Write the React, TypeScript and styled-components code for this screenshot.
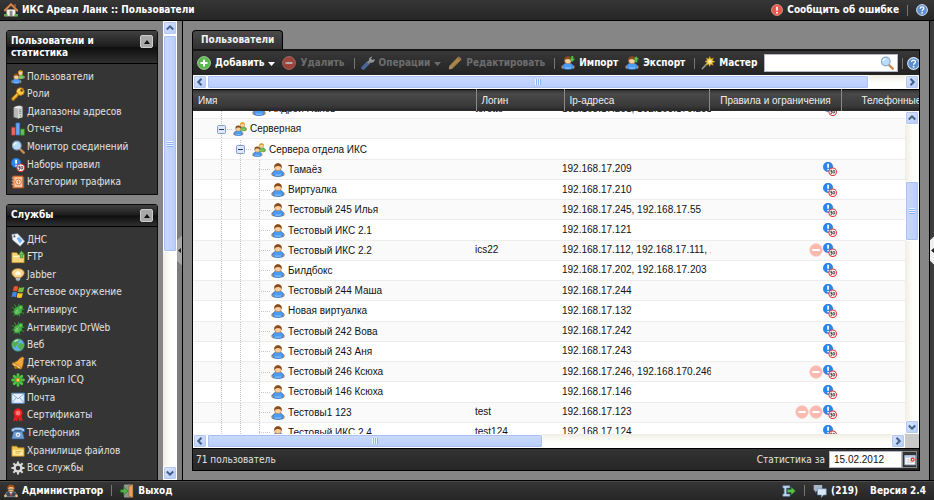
import React, { useLayoutEffect, useRef } from "react";
import styled, { createGlobalStyle, css } from "styled-components";

const ui = `"DejaVu Sans Condensed", "Noto Sans", sans-serif`;
const grid = `"Liberation Sans", "Noto Sans", sans-serif`;

const Global = createGlobalStyle`
  * { box-sizing: border-box; }
  html, body, #root { height: 100%; }
  body { margin: 0; overflow: hidden; background: #868686; font-family: ${ui}; font-size: 10px; line-height: 14px; color: #e2e2e2; }
  button, input { font: inherit; color: inherit; }
`;

/* ---------- icons ---------- */

const Svg = styled.svg<{ $size?: number; $dim?: boolean }>`
  display: block;
  flex: none;
  width: ${(p) => p.$size ?? 14}px;
  height: ${(p) => p.$size ?? 14}px;
  opacity: ${(p) => (p.$dim ? 0.6 : 1)};
`;

const Person = ({ hair = "#8a4a1a", shirt = "#4a9cf5", edge = "#2467bd" }) => (
  <g>
    <circle cx="2.600" cy="12.600" r="2" fill="#f3b67c" stroke="#b97036" strokeWidth=".6" />
    <circle cx="13.400" cy="12.600" r="2" fill="#f3b67c" stroke="#b97036" strokeWidth=".6" />
    <path d="M2.800 14.600C1 12.500 2.300 8.800 5.600 8.200h4.800c3.300.6 4.600 4.300 2.800 6.400-2.800 1.200-7.600 1.200-10.400 0z" fill={shirt} stroke={edge} strokeWidth=".8" />
    <path d="M4.800 12.500c2 1 4.400 1 6.400 0l.4 1.800c-2.200.7-5 .7-7.200 0z" fill="#fff" opacity=".3" />
    <circle cx="8" cy="5" r="3.900" fill="#f9cfa0" stroke="#a8632c" strokeWidth=".6" />
    <path d="M3.900 5.600C3.100 2 5.300.3 8 .3s4.900 1.700 4.100 5.300C11.200 4.200 10.400 3.300 8 3.300S4.800 4.200 3.900 5.600z" fill={hair} />
  </g>
);

const art: Record<string, React.ReactNode> = {
  user: <Person />,
  users: (
    <g>
      <g transform="translate(5.600 0) scale(.66)"><Person hair="#eaa21c" shirt="#6cc255" edge="#327a24" /></g>
      <g transform="translate(0 3.800) scale(.76)"><Person /></g>
    </g>
  ),
  import: (
    <g><Person /><path d="M11.500 0v3.200H9.600l3.200 3.600L16 3.200h-1.900V0z" fill="#5fc251" stroke="#26791f" strokeWidth=".6" /></g>
  ),
  export: (
    <g><Person /><path d="M11.500 7.200V4H9.600L12.800.3 16 4h-1.900v3.200z" fill="#5fc251" stroke="#26791f" strokeWidth=".6" /></g>
  ),
  admin: (
    <g>
      <path d="M0 14.500l3-5 3-1h4l3 1 3 5z" fill="#3f4a58" stroke="#9aa6b5" strokeWidth=".7" />
      <path d="M6.300 9h3.400L8 14z" fill="#eee" /><path d="M7.600 10h.9l.3 3-.8 1-.8-1z" fill="#a22" />
      <circle cx="1.800" cy="13.500" r="1.500" fill="#f0b57c" /><circle cx="14.200" cy="13.500" r="1.500" fill="#f0b57c" />
      <circle cx="8" cy="5.200" r="3.700" fill="#f5bf86" stroke="#8e5020" strokeWidth=".6" />
      <path d="M4.100 5.500C3.500 2 5.200.8 8 .8s4.500 1.200 3.900 4.700C10.800 3.800 9.800 3.400 8 3.400S5.200 3.800 4.100 5.500z" fill="#a3551b" />
      <path d="M4.500 6h7" stroke="#444" strokeWidth=".8" />
    </g>
  ),
  key: (
    <g fill="none" stroke="#a96a08" strokeWidth="1">
      <path d="M7.200 6.300L1 12.500V15h3v-1.500h1.600V12h1.500v-1.300l2.200-2z" fill="#fbbf35" />
      <circle cx="10.800" cy="5.200" r="4.400" fill="#fdc945" /><circle cx="12.200" cy="3.900" r="1.300" fill="#4a3a1a" />
      <path d="M7.500 5.500A3.400 3.400 0 0 1 10 2.400" stroke="#fff3b5" />
    </g>
  ),
  server: (
    <g>
      <path d="M5 1.500L10.500.5 13 2v12l-5 1.500L3 14V3z" fill="#b9b9b9" stroke="#666" strokeWidth=".5" />
      <path d="M3 3l5-2 5 1-5 2z" fill="#eee" /><path d="M8 4v11.500L13 14V2z" fill="#dadada" />
      <path d="M9 6l3-.8M9 8l3-.8M9 10l3-.8" stroke="#777" strokeWidth=".9" /><circle cx="10.800" cy="12.500" r=".8" fill="#49a33c" />
    </g>
  ),
  chart: (
    <g strokeWidth=".7">
      <path d="M.5 6h4.400v9H.5z" fill="#f2655f" stroke="#ae2a26" /><path d="M5.500 1h4.600v14H5.500z" fill="#6aa5f4" stroke="#245fb4" />
      <path d="M10.800 8h4.600v7h-4.600z" fill="#62bd58" stroke="#2c7a24" />
    </g>
  ),
  search: (
    <g>
      <path d="M10 10l4.500 4.500" stroke="#c98c4d" strokeWidth="2.800" strokeLinecap="round" />
      <circle cx="6.600" cy="6.300" r="5" fill="#b8dcf9" stroke="#86a9cf" strokeWidth="1.200" />
      <path d="M3.600 5.800a3 3 0 0 1 3-2.600" fill="none" stroke="#fff" strokeWidth="1.300" />
    </g>
  ),
  rules: (
    <g>
      <circle cx="5.800" cy="5.600" r="5.500" fill="#2b86ef" stroke="#1a62c0" strokeWidth=".5" />
      <path d="M5.800 2v4.600" stroke="#fff" strokeWidth="2" /><circle cx="5.800" cy="8.600" r="1" fill="#fff" />
      <circle cx="11.100" cy="11.100" r="4.300" fill="#fff" stroke="#dd3434" strokeWidth="1.200" />
      <path d="M10.600 9.400H9v1.500h1.300v2H8.600" stroke="#222" strokeWidth=".9" fill="none" /><ellipse cx="12.400" cy="11.100" rx="1" ry="1.700" fill="none" stroke="#222" strokeWidth=".9" />
    </g>
  ),
  categories: (
    <g>
      <path d="M2 1h11.500v14H2z" fill="#e8854a" stroke="#9a4b1c" strokeWidth=".7" />
      <path d="M4 2.500h9v11H4z" fill="#f8c9a4" /><circle cx="8.500" cy="8" r="3.300" fill="#fdeee0" stroke="#d0672a" />
      <path d="M8.500 6v4M7 8h3" stroke="#d0672a" strokeWidth=".9" /><path d="M.8 3.500h2M.8 7h2M.8 10.500h2" stroke="#ddd" /><path d="M14.500 2v13" stroke="#5890d0" />
    </g>
  ),
  tag: (
    <g>
      <path d="M1 1.800L7.500.8l8 8.700-5 5.500L2 8z" fill="#f2f6fb" stroke="#9fb2c8" strokeWidth=".8" />
      <path d="M6.500 6.200l2.600-2 4 4.600-3 3.200z" fill="#78b4f2" /><circle cx="3.900" cy="3.900" r="1.200" fill="#555" />
    </g>
  ),
  ftp: (
    <g>
      <path d="M1 3h5.500L8 5h7v9.500H1z" fill="#f7d679" stroke="#b98c24" strokeWidth=".8" /><path d="M2.500 7.500h11" stroke="#fff4c4" strokeWidth="1.500" />
      <path d="M10.500 9V5h-2L12 .8 15.500 5h-2v4z" fill="#6cc25a" stroke="#2b7c22" strokeWidth=".6" />
    </g>
  ),
  bulb: (
    <g>
      <path d="M8 .8c4.200 0 7 2 7 4.800s-2.500 4-4 5.400H5C3.500 9.600 1 8.400 1 5.600S3.800.8 8 .8z" fill="#fcd58a" stroke="#cf963c" strokeWidth=".8" />
      <path d="M5 8V5l3-1.500L11 5v3z" fill="#fffbe6" /><path d="M5.500 11h5v2.500L9 15.200H7l-1.500-1.700z" fill="#8f979f" /><path d="M5.500 12.500h5" stroke="#e8e8e8" />
    </g>
  ),
  windows: (
    <g>
      <path d="M3.300 1.800C5 .8 6.800 1 8.200 2L7.100 7.300c-1.600-1-3.300-1.100-5-.3z" fill="#f0532b" />
      <path d="M9.100 2.500c1.800.9 3.700.9 6.100-.1L13.900 7.700c-2 1-4 .9-5.900 0z" fill="#7cba3a" />
      <path d="M1.800 8.200c1.700-.8 3.300-.7 5 .3l-1.200 5.500c-1.600-1.100-3.300-1.100-5.200-.3z" fill="#3f86e4" />
      <path d="M7.700 8.900c1.900 1 3.900.9 5.900.1l-1.300 5.400c-2 .8-4 .8-5.800-.3z" fill="#fbc52e" />
    </g>
  ),
  bug: (
    <g stroke="#2f9b35" fill="none" strokeWidth="1.100">
      <path d="M1 5l4 2M.8 10.500L5 9.500M3 15l2.500-3.500M4 1.500l2 4M9 1l-.5 4M15.200 7l-4 1M15 12l-4-1.500M10 15.500L9 12M13.500 2L10 5.500" />
      <ellipse cx="7.800" cy="9" rx="4" ry="5" fill="#49b04a" transform="rotate(38 7.800 9)" /><circle cx="11" cy="5.200" r="2.300" fill="#63c95b" />
      <path d="M5.500 7.500l4 4M4.500 9.500l3 3M9 6.500L5 12" stroke="#a8e79c" strokeWidth=".6" />
    </g>
  ),
  globe: (
    <g>
      <circle cx="8" cy="8" r="7.200" fill="#5fb0e8" stroke="#3a8a4a" strokeWidth=".8" />
      <path d="M3 3.500C5 1.500 8 1 9.500 2L8 4.500 9 6 6.500 8 5 11 1.500 9C1 7 1.500 5 3 3.500zM10.500 6l4 .5c.8 3-1.500 6-4 7.300L8.500 11l-1-2.500z" fill="#55b04c" />
      <path d="M4 4.500a5 5 0 0 1 4-2" stroke="#fff" opacity=".7" fill="none" strokeWidth="1.300" />
    </g>
  ),
  bell: (
    <g stroke="#a96a12" strokeWidth=".8">
      <path d="M13.500 1l1.500 1.500c-1.500 2-.5 5-1.500 8L12 14.500 1 8.200C4 7.500 7 6.500 9.500 3.500 10.500 2 12 1 13.500 1z" fill="#f3a93a" /><ellipse cx="6.500" cy="11.500" rx="6" ry="1.500" transform="rotate(30 6.500 11.500)" fill="#ffd478" />
      <circle cx="5.500" cy="13" r="1.500" fill="#c67d18" />
    </g>
  ),
  flower: (
    <g>
      <g stroke="#4cc443" strokeWidth="3.200" strokeLinecap="round"><path d="M8 1.800v12.400M1.800 8h12.400M3.600 3.600l8.800 8.800M12.400 3.600l-8.800 8.800" /></g>
      <g stroke="#237d22" strokeWidth=".6"><path d="M6 2.500L10 13.500M2.500 6l11 4M2.500 10l11-4M10 2.500L6 13.500" /></g>
      <circle cx="8" cy="8" r="2.100" fill="#ffd83c" stroke="#d86a2a" strokeWidth=".7" />
    </g>
  ),
  mail: (
    <g><path d="M.8 2.500h14.400v11.500H.8z" fill="#e7f1fd" stroke="#5c8fd0" /><path d="M1 3l7 6 7-6M1.200 13.500l4.800-6M14.800 13.500L10 7.500" fill="none" stroke="#6b9cda" strokeWidth=".9" /></g>
  ),
  cert: (
    <g><path d="M4 9L2.500 15l3-1 1.500 1.600L8 11l1.500 4.600L11 14l2.500 1L12 9z" fill="#e81e1e" /><circle cx="8" cy="5.600" r="5" fill="#ee2b2b" stroke="#bd0c0c" strokeWidth=".7" /><circle cx="8" cy="5.600" r="2.600" fill="#ff7a74" /></g>
  ),
  phone: (
    <g>
      <path d="M3 6h10l2 7.500v1.300H1v-1.300z" fill="#6c9bd2" stroke="#2f5e9a" strokeWidth=".7" /><path d="M.6 3.500C3 1 13 1 15.400 3.500V6.300h-3.600V4.800H4.200v1.500H.6z" fill="#a9c8ec" stroke="#3a6ba8" strokeWidth=".7" />
      <circle cx="8" cy="10" r="2.700" fill="#e4effb" /><circle cx="8" cy="10" r="1" fill="#5280b8" />
    </g>
  ),
  folder: (
    <g><path d="M1 2.500h5.500L8 4.300h7V14H1z" fill="#f1c14c" stroke="#b98a20" strokeWidth=".8" /><path d="M2 6.500h12V13H2z" fill="#fde9a2" /><path d="M5 8.500h7M5 10.500h5" stroke="#d9aa42" /></g>
  ),
  gear: (
    <g><path d="M8 .5v15M.5 8h15M2.700 2.700l10.600 10.600M13.300 2.700L2.700 13.300" stroke="#d5d5d5" strokeWidth="2.400" /><circle cx="8" cy="8" r="5.300" fill="#d9d9d9" /><circle cx="8" cy="8" r="2.500" fill="#353535" /></g>
  ),
  home: (
    <g>
      <path d="M3 7.500h10V15H3z" fill="#f4f1ea" stroke="#a8a090" strokeWidth=".6" /><path d="M.8 8.600L8 1.500l7.200 7.100" fill="none" stroke="#d98445" strokeWidth="2.300" strokeLinecap="round" />
      <path d="M6.500 9h3.200v6H6.500z" fill="#8a8a8a" /><path d="M0 12.500h4V15.500H0zM12 12.500h4v3h-4z" fill="#5bb04a" /><path d="M11.500 1.500h2v3.300l-2-1.800z" fill="#b05a30" />
    </g>
  ),
  error: (
    <g><circle cx="8" cy="8" r="7.300" fill="#e8584a" stroke="#f7a69a" strokeWidth="1" /><path d="M8 3.500V9" stroke="#fff" strokeWidth="2.200" /><circle cx="8" cy="11.700" r="1.300" fill="#fff" /></g>
  ),
  help: (
    <g><circle cx="8" cy="8" r="7.200" fill="#5d8fd0" stroke="#d8e6f7" strokeWidth="1.300" /><path d="M5.600 6.200C5.700 3 10.500 3.200 10.400 6c0 1.600-2.300 1.700-2.300 3.600" fill="none" stroke="#fff" strokeWidth="1.600" /><circle cx="8.100" cy="11.900" r="1.100" fill="#fff" /></g>
  ),
  add: (
    <g><circle cx="8" cy="8" r="7.300" fill="#5cb650" stroke="#a9dea0" strokeWidth="1" /><path d="M8 4v8M4 8h8" stroke="#fff" strokeWidth="2.200" /></g>
  ),
  remove: (
    <g><circle cx="8" cy="8" r="7.300" fill="#ea4f42" stroke="#f49a8e" strokeWidth="1" /><path d="M4 8h8" stroke="#fff" strokeWidth="2.400" /></g>
  ),
  denied: (
    <g><circle cx="8" cy="8" r="7.300" fill="#f9b9ae" stroke="#fad3cc" strokeWidth=".8" /><path d="M3.800 8h8.400" stroke="#fff" strokeWidth="2.400" /></g>
  ),
  wrench: (
    <g><path d="M2.500 13.500L8 8" stroke="#5c8fe0" strokeWidth="4.400" strokeLinecap="round" /><path d="M8 8l3-3" stroke="#c9d0d8" strokeWidth="2.800" /><path d="M10 7C8 4 9.500 1 13 .5L11.500 3l1.300 1.500 2.900-1C16 6.500 13 9 10 7z" fill="#d3d9e0" /></g>
  ),
  pencil: (
    <g><path d="M1 15l1.200-4.500L11 1.500l3.500 3.500-9 9z" fill="#f0b64a" stroke="#a8742a" strokeWidth=".7" /><path d="M11 1.500l1.500-1 3 3-1 1.500z" fill="#e8a08c" /><path d="M1 15l1.200-4.500L5.500 14z" fill="#f7ddb5" /><path d="M4 11.800L12 3.500" stroke="#fde29a" /></g>
  ),
  wand: (
    <g><path d="M1.500 14.500L8.500 7" stroke="#8e8e8e" strokeWidth="1.900" strokeLinecap="round" /><path d="M10 .5l1.200 3 3-1.300-1.300 3L16 6.500l-3.200 1.200 1.200 3-3-1.300L9.800 12 8.700 9.200 5.800 10.500l1.300-3L4.500 6.300l2.700-1.200L6 2.200l2.800 1.300z" fill="#fbd048" stroke="#c38c1c" strokeWidth=".5" /><circle cx="10.200" cy="6.400" r="1.600" fill="#fffad0" /></g>
  ),
  exit: (
    <g><path d="M5 1h9v14H5z" fill="#8b968b" stroke="#aaa" strokeWidth=".7" /><path d="M10 2.500L14.800.5v15L10 14z" fill="#e3a35c" stroke="#8a5520" strokeWidth=".6" /><path d="M.5 6.500H4V3.500L9 8l-5 4.500v-3H.5z" fill="#56b54a" stroke="#226e1c" strokeWidth=".7" /></g>
  ),
  sync: (
    <g><path d="M1 2h8v2.500H5v7h4V14H1v-2.500h1.500v-7H1z" fill="#c9def4" stroke="#6187b2" strokeWidth=".7" /><path d="M6 6.300h4.500V3.500L15.500 8l-5 4.500V9.700H6z" fill="#5bc04c" stroke="#226e1c" strokeWidth=".6" /></g>
  ),
  chat: (
    <g><path d="M.8 1h9.700v6.500H5L2.500 10V7.500H.8z" fill="#a7b6c8" /><path d="M5 5.500h10.200v7H12l-2.500 3v-3H5z" fill="#d7e7f8" stroke="#5f87b5" strokeWidth=".7" /></g>
  ),
  calendar: (
    <g><path d="M1 2h14v12.500H1z" fill="#fafafa" stroke="#93a6c0" /><path d="M1 2h14v3H1z" fill="#b8cbe6" /><path d="M3 8h10M3 11h10M5.500 6v7M9 6v7" stroke="#bbb" strokeWidth=".7" /><circle cx="11.500" cy="7.500" r="2" fill="none" stroke="#d22" strokeWidth="1.400" /></g>
  ),
};

const Icon = ({ name, size, dim }: { name: string; size?: number; dim?: boolean }) => (
  <Svg viewBox="0 0 16 16" $size={size} $dim={dim} aria-hidden="true">{art[name]}</Svg>
);

/* ---------- shell ---------- */

const Shell = styled.div`
  display: flex;
  flex-direction: column;
  height: 100vh;
`;

const Bar = styled.div<{ $bottom?: boolean }>`
  flex: none;
  display: flex;
  align-items: center;
  gap: 4px;
  height: ${(p) => (p.$bottom ? 20 : 21)}px;
  padding: 0 6px 0 4px;
  background: linear-gradient(#363636, #262626);
  ${(p) => p.$bottom
    ? css`border-top: 1px solid #000; box-shadow: inset 0 1px #4a4a4a;`
    : css`border-bottom: 1px solid #000;`}
`;

const Title = styled.h1`
  margin: 0;
  font-size: 10px;
  line-height: 14px;
  color: #fff;
`;

const Version = styled.strong`
  padding: 0 2px 0 8px;
  color: #fff;
`;

const Spacer = styled.span`flex: 1;`;

const Action = styled.button<{ $off?: boolean }>`
  flex: none;
  display: flex;
  align-items: center;
  gap: 4px;
  padding: 0;
  border: 0;
  background: none;
  font-weight: bold;
  white-space: nowrap;
  color: ${(p) => (p.$off ? "#6c6c6c" : "#fff")};
`;

const Divider = styled.span`
  flex: none;
  width: 1px;
  height: 11px;
  margin: 0 4px;
  background: #777;
`;

const Work = styled.div`
  flex: 1;
  min-height: 0;
  display: flex;
  background: #868686;
`;

/* ---------- scrollbars ---------- */

const Track = styled.div<{ $row?: boolean }>`
  flex: none;
  display: flex;
  flex-direction: ${(p) => (p.$row ? "row" : "column")};
  ${(p) => (p.$row ? "height: 14px;" : "width: 14px;")}
  background: linear-gradient(${(p) => (p.$row ? "180deg" : "90deg")}, #efede4, #fdfdf8 50%, #fff);
`;

const ArrowButton = styled.button`
  flex: none;
  display: flex;
  align-items: center;
  justify-content: center;
  width: 14px;
  height: 14px;
  padding: 0;
  border: 1px solid #fff;
  border-radius: 2px;
  background: linear-gradient(135deg, #dbe6fe, #b3c9f8);
  box-shadow: inset 0 0 0 1px #b4c8f2;
`;

const Thumb = styled.div<{ $row?: boolean; $grow: number }>`
  flex: ${(p) => p.$grow} 1 0;
  display: flex;
  align-items: center;
  justify-content: center;
  border: 1px solid #fff;
  border-radius: 2px;
  background: linear-gradient(${(p) => (p.$row ? "180deg" : "90deg")}, #cad9fe, #b9cdfb);
  box-shadow: inset 0 0 0 1px #a9c0f0;
`;

const Grip = styled.span<{ $row?: boolean }>`
  width: 6px;
  height: 6px;
  background: repeating-linear-gradient(${(p) => (p.$row ? "90deg" : "180deg")}, #eef4ff 0 1px, #8cb0f8 1px 2px);
`;

const Gap = styled.span<{ $grow: number }>`flex: ${(p) => p.$grow} 1 0;`;

const turns = { up: 0, right: 90, down: 180, left: 270 };

const Arrow = ({ to }: { to: keyof typeof turns }) => (
  <ArrowButton type="button" aria-label={to}>
    <Svg viewBox="0 0 10 10" $size={10}>
      <path d="M1.800 6.500L5 3.300l3.200 3.200" fill="none" stroke="#44608c" strokeWidth="2" transform={`rotate(${turns[to]} 5 5)`} />
    </Svg>
  </ArrowButton>
);

const Scrollbar = ({ row, before = 0, size, after }: { row?: boolean; before?: number; size: number; after: number }) => (
  <Track $row={row}>
    <Arrow to={row ? "left" : "up"} />
    <Gap $grow={before} />
    <Thumb $row={row} $grow={size}><Grip $row={row} /></Thumb>
    <Gap $grow={after} />
    <Arrow to={row ? "right" : "down"} />
  </Track>
);

/* ---------- sidebar ---------- */

const Side = styled.aside`
  flex: none;
  display: flex;
  width: 177px;
`;

const SideBody = styled.div`
  flex: 1;
  overflow: hidden;
  display: flex;
  flex-direction: column;
  gap: 9px;
  padding: 9px 5px 0 6px;
`;

const Card = styled.section`
  flex: none;
  border: 1px solid #0c0c0c;
  border-radius: 3px 3px 0 0;
  background: #353535;
`;

const CardHead = styled.header`
  display: flex;
  align-items: flex-start;
  gap: 8px;
  padding: 4px;
  border-bottom: 1px solid #000;
  background: linear-gradient(#414141, #1c1c1c 48%, #0e0e0e 52%, #303030);
`;

const CardTitle = styled.h2`
  flex: 1;
  margin: 0;
  padding-right: 24px;
  font-size: 10px;
  line-height: 12px;
  color: #fff;
`;

const Collapse = styled.button`
  display: flex;
  align-items: center;
  justify-content: center;
  width: 13px;
  height: 13px;
  padding: 0;
  border: 1px solid #ccc;
  border-radius: 2px;
  background: #a8a8a8;
`;

const Menu = styled.ul<{ $height: number }>`
  display: grid;
  grid-auto-rows: 1fr;
  height: ${(p) => p.$height}px;
  margin: 0;
  padding: 0 4px;
  list-style: none;
`;

const MenuItem = styled.li`display: flex;`;

const MenuLink = styled.a`
  display: flex;
  align-items: center;
  gap: 2px;
  color: #e2e2e2;
  text-decoration: none;
  white-space: nowrap;
`;

const MenuWrap = styled.div`padding: 4px 0 3px;`;

const Panel = ({ title, items, height }: { title: string; items: [string, string][]; height: number }) => (
  <Card>
    <CardHead>
      <CardTitle>{title}</CardTitle>
      <Collapse type="button" aria-label="Свернуть">
        <Svg viewBox="0 0 8 8" $size={8}><path d="M1 6l3-4 3 4z" fill="#111" /></Svg>
      </Collapse>
    </CardHead>
    <MenuWrap>
      <Menu $height={height}>
        {items.map(([icon, label]) => (
          <MenuItem key={label}><MenuLink href="#"><Icon name={icon} />{label}</MenuLink></MenuItem>
        ))}
      </Menu>
    </MenuWrap>
  </Card>
);

const statistics: [string, string][] = [
  ["users", "Пользователи"], ["key", "Роли"], ["server", "Диапазоны адресов"], ["chart", "Отчеты"],
  ["search", "Монитор соединений"], ["rules", "Наборы правил"], ["categories", "Категории трафика"],
];

const services: [string, string][] = [
  ["tag", "ДНС"], ["ftp", "FTP"], ["bulb", "Jabber"], ["windows", "Сетевое окружение"], ["bug", "Антивирус"],
  ["bug", "Антивирус DrWeb"], ["globe", "Веб"], ["bell", "Детектор атак"], ["flower", "Журнал ICQ"], ["mail", "Почта"],
  ["cert", "Сертификаты"], ["phone", "Телефония"], ["folder", "Хранилище файлов"], ["gear", "Все службы"],
];

const Splitter = styled.div<{ $dark?: boolean }>`
  flex: none;
  display: flex;
  align-items: center;
  width: ${(p) => (p.$dark ? 5 : 6)}px;
  background: ${(p) => (p.$dark ? "#3c3c3c" : "#7c7c7c")};
  ${(p) => (p.$dark ? "border-left: 1px solid #000;" : "border-right: 1px solid #000;")}
`;

const Handle = styled.button<{ $light?: boolean }>`
  width: 5px;
  height: 30px;
  padding: 0;
  border: 0;
  background: ${(p) => (p.$light ? "#f0f0f0" : "#a8a8a8")};
  clip-path: polygon(100% 0, 100% 100%, 0 84%, 0 16%);
`;

const HandleMark = () => (
  <Svg viewBox="0 0 5 5" $size={5}><path d="M4 0v5L1 2.500z" fill="#222" /></Svg>
);

/* ---------- main panel ---------- */

const Main = styled.main`
  flex: 1;
  min-width: 0;
  display: flex;
  flex-direction: column;
  padding: 9px;
`;

const Tab = styled.button`
  align-self: flex-start;
  height: 19px;
  padding: 0 8px;
  border: 1px solid #000;
  border-bottom: 0;
  border-radius: 4px 4px 0 0;
  background: linear-gradient(#4a4a4a, #303030);
  font-weight: bold;
  color: #f2f2f2;
`;

const Frame = styled.div`
  flex: 1;
  min-height: 0;
  display: flex;
  flex-direction: column;
  overflow: hidden;
  border: 1px solid #000;
  border-top: 2px solid #161616;
`;

const Toolbar = styled.div`
  flex: none;
  display: flex;
  align-items: center;
  gap: 7px;
  height: 24px;
  padding: 0 0 0 4px;
  overflow: hidden;
  background: linear-gradient(#383838, #232323);
`;

const ToolDivider = styled(Divider)`
  margin: 0 -1px 0 2px;
`;

const SearchGroup = styled.div`
  flex: 1;
  min-width: 0;
  display: flex;
  align-items: center;
`;

const Search = styled.label`
  flex: 1;
  min-width: 0;
  display: flex;
  align-items: center;
  height: 18px;
  padding: 0 3px;
  border: 1px solid #b5b8c8;
  background: #fff;
`;

const Field = styled.input`
  flex: 1;
  min-width: 0;
  padding: 0;
  border: 0;
  outline: 0;
  background: none;
  color: #111;
  font-family: ${grid};
`;

const HelpSlot = styled.div`
  flex: none;
  width: 12px;
  overflow: hidden;
`;

const Caret = () => (
  <Svg viewBox="0 0 7 7" $size={7}><path d="M0 2h7L3.500 6z" fill="currentColor" /></Svg>
);

const HeadTable = styled.table`
  flex: none;
  width: 100%;
  height: 22px;
  table-layout: fixed;
  border-collapse: collapse;
  border-top: 1px solid #000;
  background: linear-gradient(#2c2c2c, #4a4a4a 20%, #383838 80%, #262626);
`;

const HeadCell = styled.th<{ $width?: number; $center?: boolean }>`
  width: ${(p) => (p.$width ? `${p.$width}px` : "auto")};
  padding: 0 4px 0 5px;
  overflow: hidden;
  border-left: 1px solid #8a8a8a;
  text-align: ${(p) => (p.$center ? "center" : "left")};
  font: 10px/14px ${grid};
  white-space: nowrap;
  color: #eee;
  &:first-child { border-left: 0; }
  &:last-child { padding: 0 0 0 20px; }
`;

const GridArea = styled.div`
  flex: 1;
  min-height: 0;
  display: flex;
  background: #fff;
`;

const GridBody = styled.div`
  flex: 1;
  min-width: 0;
  display: flex;
  flex-direction: column;
`;

const Viewport = styled.div`
  flex: 1;
  min-height: 0;
  overflow: hidden;
`;

const Rows = styled.table`
  width: 100%;
  height: 344px;
  table-layout: fixed;
  border-collapse: separate;
  border-spacing: 0;
  font: 10px/14px ${grid};
  color: #111;
`;

const Row = styled.tr`
  background: #fff;
  &:nth-child(even) { background: #fafafa; }
`;

const Cell = styled.td<{ $width?: number }>`
  width: ${(p) => (p.$width ? `${p.$width}px` : "auto")};
  height: 20px;
  padding: 0 0 0 4px;
  overflow: hidden;
  border-bottom: 1px solid #ededed;
  white-space: nowrap;
`;

const NameCell = styled(Cell)`padding-left: 19px;`;

const TreeLine = styled.div`
  display: flex;
  align-items: center;
  height: 20px;
  margin-bottom: -1px;
`;

const dotsDown = (length: string) =>
  `repeating-linear-gradient(#c4c4c4 0 1px, transparent 1px 2px) 9px 0 / 1px ${length} no-repeat`;
const dotsAcross = "repeating-linear-gradient(90deg, #c4c4c4 0 1px, transparent 1px 2px) 9px 50% / 12px 1px no-repeat";

const Guide = styled.span<{ $branch?: boolean; $last?: boolean }>`
  flex: none;
  display: flex;
  align-items: center;
  width: ${(p) => (p.$branch ? 21 : 19)}px;
  height: 100%;
  padding-left: 5px;
  background: ${(p) => {
    const down = dotsDown(p.$last ? "50%" : "100%");
    return p.$branch ? `${down}, ${dotsAcross}` : down;
  }};
`;

const NodeLabel = styled.span`padding-left: 3px;`;

const Marks = styled.div`
  display: flex;
  justify-content: flex-end;
  padding-right: 1px;
`;

const Minus = () => (
  <Svg viewBox="0 0 9 9" $size={9}>
    <rect x=".5" y=".5" width="8" height="8" rx="1" fill="#dfe8f4" stroke="#7f9dc2" />
    <path d="M2 4.500h5" stroke="#1d3c66" />
  </Svg>
);

type Node = { depth: number; name: string; group?: boolean; last?: boolean; login?: string; ip?: string; denied?: number };

const nodes: Node[] = [
  { depth: 2, name: "Андрей Панов", last: true, login: "teretto", ip: "192.168.17.251, 192.168.170.251" },
  { depth: 1, name: "Серверная", group: true },
  { depth: 2, name: "Сервера отдела ИКС", group: true },
  { depth: 3, name: "Тамаёз", ip: "192.168.17.209" },
  { depth: 3, name: "Виртуалка", ip: "192.168.17.210" },
  { depth: 3, name: "Тестовый 245 Илья", ip: "192.168.17.245, 192.168.17.55" },
  { depth: 3, name: "Тестовый ИКС 2.1", ip: "192.168.17.121" },
  { depth: 3, name: "Тестовый ИКС 2.2", login: "ics22", ip: "192.168.17.112, 192.168.17.111, 192.168.17.113", denied: 1 },
  { depth: 3, name: "Билдбокс", ip: "192.168.17.202, 192.168.17.203" },
  { depth: 3, name: "Тестовый 244 Маша", ip: "192.168.17.244" },
  { depth: 3, name: "Новая виртуалка", ip: "192.168.17.132" },
  { depth: 3, name: "Тестовый 242 Вова", ip: "192.168.17.242" },
  { depth: 3, name: "Тестовый 243 Аня", ip: "192.168.17.243" },
  { depth: 3, name: "Тестовый 246 Ксюха", ip: "192.168.17.246, 192.168.170.246", denied: 1 },
  { depth: 3, name: "Тестовый 146 Ксюха", ip: "192.168.17.146" },
  { depth: 3, name: "Тестовы1 123", login: "test", ip: "192.168.17.123", denied: 2 },
  { depth: 3, name: "Тестовый ИКС 2.4", login: "test124", ip: "192.168.17.124" },
];

const UserRow = ({ node }: { node: Node }) => (
  <Row>
    <NameCell>
      <TreeLine>
        {Array.from({ length: node.depth }, (_, i) => {
          const branch = i === node.depth - 1;
          return (
            <Guide key={i} $branch={branch} $last={branch && node.last}>
              {node.group && branch && <Minus />}
            </Guide>
          );
        })}
        <Icon name={node.group ? "users" : "user"} />
        <NodeLabel>{node.name}</NodeLabel>
      </TreeLine>
    </NameCell>
    <Cell $width={87}>{node.login}</Cell>
    <Cell $width={153}>{node.ip}</Cell>
    <Cell $width={127}>
      {!node.group && (
        <Marks>
          {Array.from({ length: node.denied ?? 0 }, (_, i) => <Icon key={i} name="denied" />)}
          <Icon name="rules" />
        </Marks>
      )}
    </Cell>
    <Cell $width={67} />
  </Row>
);

const Corner = styled.div`
  flex: none;
  height: 14px;
  background: #c8c8c8;
`;

const SideScroll = styled.div`
  flex: none;
  display: flex;
  flex-direction: column;
  ${Track} { flex: 1; }
`;

const Footer = styled.footer`
  flex: none;
  display: flex;
  align-items: center;
  gap: 5px;
  height: 22px;
  padding: 0 2px 0 3px;
  border-top: 1px solid #000;
  background: linear-gradient(#333, #262626);
`;

const DateBox = styled.div`
  display: flex;
  align-items: center;
`;

const DateLabel = styled.label`padding-right: 4px;`;

const DateInput = styled(Field)`
  flex: none;
  width: 73px;
  height: 17px;
  padding: 0 4px;
  border: 1px solid #b5b8c8;
  background: #fff;
`;

const DateButton = styled.button`
  display: flex;
  align-items: center;
  justify-content: center;
  width: 15px;
  height: 17px;
  padding: 0;
  border: 1px solid #888;
  background: #333;
`;

export default function App() {
  const viewport = useRef<HTMLDivElement>(null);

  useLayoutEffect(() => {
    if (viewport.current) viewport.current.scrollTop = 12;
  }, []);

  return (
    <Shell>
      <Global />
      <Bar>
        <Icon name="home" />
        <Title>ИКС Ареал Ланк :: Пользователи</Title>
        <Spacer />
        <Action type="button"><Icon name="error" size={12} />Сообщить об ошибке</Action>
        <Divider />
        <Action type="button" aria-label="Справка"><Icon name="help" size={12} /></Action>
      </Bar>

      <Work>
        <Side>
          <SideBody>
            <Panel title="Пользователи и статистика" items={statistics} height={123} />
            <Panel title="Службы" items={services} height={246} />
          </SideBody>
          <Scrollbar size={216} after={215} />
        </Side>
        <Splitter><Handle type="button" aria-label="Скрыть меню"><HandleMark /></Handle></Splitter>

        <Main>
          <Tab type="button">Пользователи</Tab>
          <Frame>
            <Toolbar>
              <Action type="button"><Icon name="add" />Добавить<Caret /></Action>
              <Action type="button" $off><Icon name="remove" dim />Удалить</Action>
              <ToolDivider />
              <Action type="button" $off><Icon name="wrench" dim />Операции<Caret /></Action>
              <Action type="button" $off><Icon name="pencil" dim />Редактировать</Action>
              <ToolDivider />
              <Action type="button"><Icon name="import" />Импорт</Action>
              <Action type="button"><Icon name="export" />Экспорт</Action>
              <ToolDivider />
              <Action type="button"><Icon name="wand" />Мастер</Action>
              <SearchGroup>
                <Search><Field type="text" aria-label="Поиск" /><Icon name="search" /></Search>
                <Divider />
                <HelpSlot><Action type="button" aria-label="Справка"><Icon name="help" size={13} /></Action></HelpSlot>
              </SearchGroup>
            </Toolbar>
            <Scrollbar row size={662} after={36} />
            <HeadTable>
              <thead>
                <tr>
                  <HeadCell>Имя</HeadCell>
                  <HeadCell $width={88}>Логин</HeadCell>
                  <HeadCell $width={145}>Ip-адреса</HeadCell>
                  <HeadCell $width={132} $center>Правила и ограничения</HeadCell>
                  <HeadCell $width={78}>Телефонные</HeadCell>
                </tr>
              </thead>
            </HeadTable>
            <GridArea>
              <GridBody>
                <Viewport ref={viewport}>
                  <Rows>
                    <tbody>{nodes.map((n) => <UserRow key={n.name} node={n} />)}</tbody>
                  </Rows>
                </Viewport>
                <Scrollbar row size={334} after={349} />
              </GridBody>
              <SideScroll>
                <Scrollbar before={56} size={58} after={180} />
                <Corner />
              </SideScroll>
            </GridArea>
            <Footer>
              71 пользователь
              <Spacer />
              <DateBox>
                <DateLabel htmlFor="stat-date">Статистика за</DateLabel>
                <DateInput id="stat-date" type="text" defaultValue="15.02.2012" />
                <DateButton type="button" aria-label="Выбрать дату"><Icon name="calendar" size={12} /></DateButton>
              </DateBox>
            </Footer>
          </Frame>
        </Main>
        <Splitter $dark><Handle type="button" $light aria-label="Показать панель"><HandleMark /></Handle></Splitter>
      </Work>

      <Bar $bottom>
        <Action type="button"><Icon name="admin" />Администратор</Action>
        <Divider />
        <Action type="button"><Icon name="exit" />Выход</Action>
        <Spacer />
        <Action type="button" aria-label="Синхронизация"><Icon name="sync" /></Action>
        <Divider />
        <Action type="button"><Icon name="chat" />(219)</Action>
        <Version>Версия 2.4</Version>
      </Bar>
    </Shell>
  );
}
